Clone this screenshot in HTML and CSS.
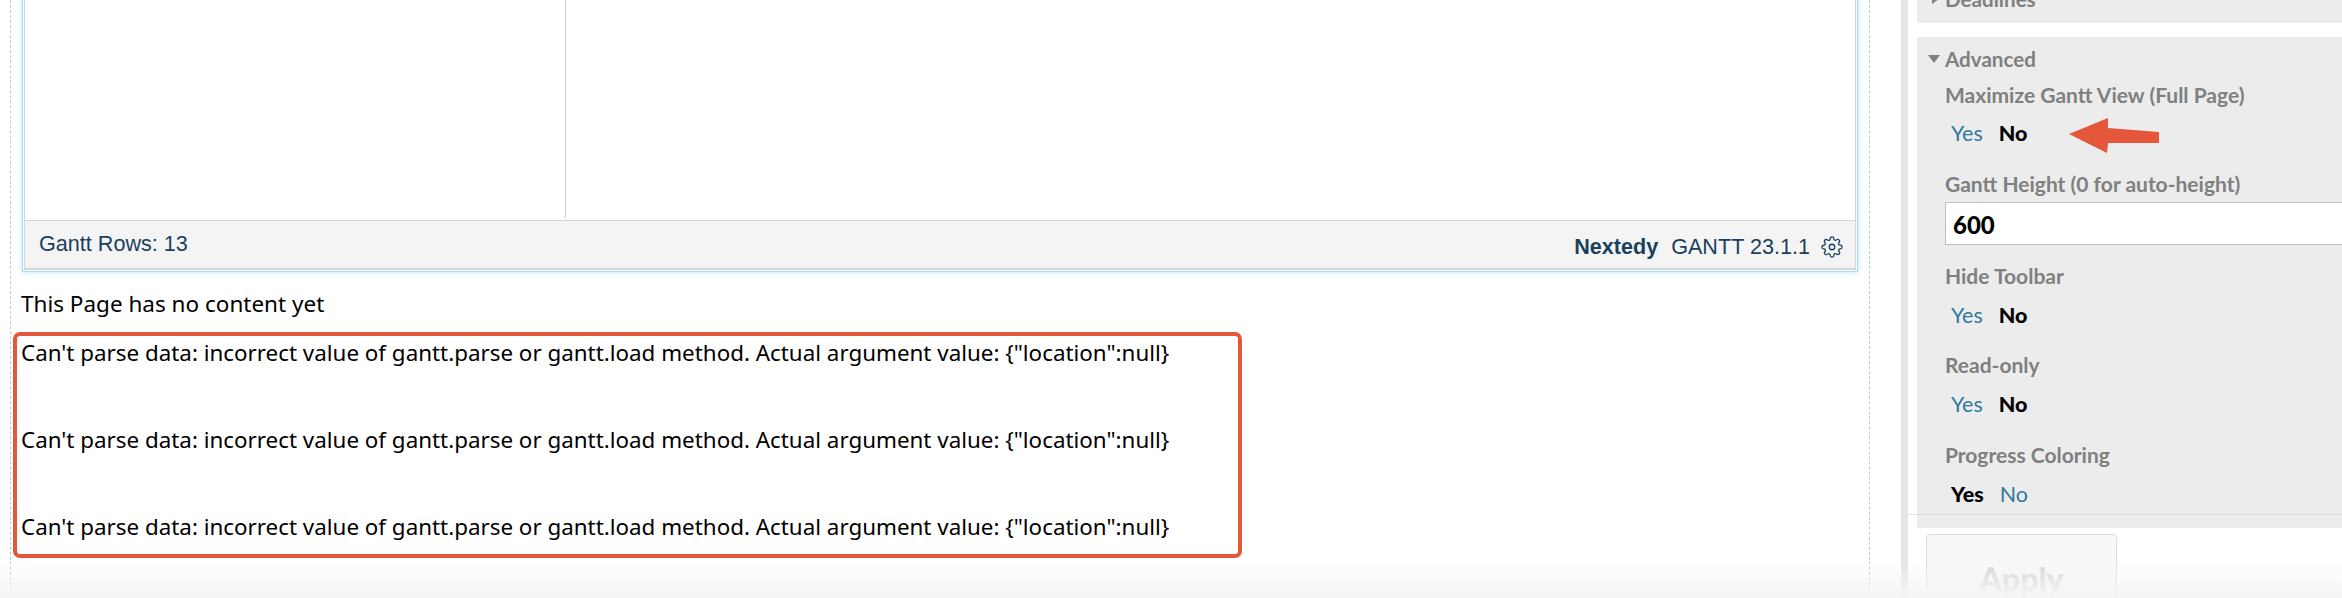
FILE: index.html
```html
<!DOCTYPE html>
<html lang="en">
<head>
<meta charset="utf-8">
<title>Gantt</title>
<link rel="stylesheet" href="styles.css">
</head>
<body>
<div class="layout">
  <main class="main">
    <div class="page">
      <section class="gantt">
        <div class="gantt-body"><div class="grid-col"></div></div>
        <footer class="gantt-foot">
          <span class="rows">Gantt Rows: 13</span>
          <span class="brand"><b>Nextedy</b><span>GANTT 23.1.1</span>
            <svg class="gear" viewBox="0 0 24 24" aria-hidden="true"><circle cx="12" cy="12" r="3"/><path d="M19.4 15a1.65 1.65 0 0 0 .33 1.82l.06.06a2 2 0 0 1 0 2.83 2 2 0 0 1-2.83 0l-.06-.06a1.65 1.65 0 0 0-1.82-.33 1.65 1.65 0 0 0-1 1.51V21a2 2 0 0 1-2 2 2 2 0 0 1-2-2v-.09A1.65 1.65 0 0 0 9 19.4a1.65 1.65 0 0 0-1.82.33l-.06.06a2 2 0 0 1-2.83 0 2 2 0 0 1 0-2.83l.06-.06a1.65 1.65 0 0 0 .33-1.82 1.65 1.65 0 0 0-1.51-1H3a2 2 0 0 1-2-2 2 2 0 0 1 2-2h.09A1.65 1.65 0 0 0 4.6 9a1.65 1.65 0 0 0-.33-1.82l-.06-.06a2 2 0 0 1 0-2.83 2 2 0 0 1 2.83 0l.06.06a1.65 1.65 0 0 0 1.82.33H9a1.65 1.65 0 0 0 1-1.51V3a2 2 0 0 1 2-2 2 2 0 0 1 2 2v.09a1.65 1.65 0 0 0 1 1.51 1.65 1.65 0 0 0 1.82-.33l.06-.06a2 2 0 0 1 2.83 0 2 2 0 0 1 0 2.83l-.06.06a1.65 1.65 0 0 0-.33 1.82V9a1.65 1.65 0 0 0 1.51 1H21a2 2 0 0 1 2 2 2 2 0 0 1-2 2h-.09a1.65 1.65 0 0 0-1.51 1z"/></svg>
          </span>
        </footer>
      </section>
      <p class="note">This Page has no content yet</p>
      <div class="errors">
        <p>Can't parse data: incorrect value of gantt.parse or gantt.load method. Actual argument value: {"location":null}</p>
        <p>Can't parse data: incorrect value of gantt.parse or gantt.load method. Actual argument value: {"location":null}</p>
        <p>Can't parse data: incorrect value of gantt.parse or gantt.load method. Actual argument value: {"location":null}</p>
      </div>
    </div>
  </main>
  <aside class="side">
    <div class="panel panel-closed"><h3 class="head"><i class="tri-right"></i>Deadlines</h3></div>
    <div class="panel panel-open">
      <h3 class="head"><i class="tri-down"></i>Advanced</h3>
      <div class="field">
        <label class="lab">Maximize Gantt View (Full Page)</label>
        <div class="opts"><a>Yes</a><b>No</b></div>
      </div>
      <div class="field field-input">
        <label class="lab">Gantt Height (0 for auto-height)</label>
        <div class="input">600</div>
      </div>
      <div class="field">
        <label class="lab">Hide Toolbar</label>
        <div class="opts"><a>Yes</a><b>No</b></div>
      </div>
      <div class="field">
        <label class="lab">Read-only</label>
        <div class="opts"><a>Yes</a><b>No</b></div>
      </div>
      <div class="field">
        <label class="lab">Progress Coloring</label>
        <div class="opts"><b>Yes</b><a>No</a></div>
      </div>
    </div>
    <div class="apply">Apply</div>
  </aside>
</div>
<svg class="arrow" viewBox="0 0 92 37" aria-hidden="true"><polygon points="0,16 39,0 39,10 90,14 90,25 39,25 38,35"/></svg>
<div class="fade"></div>
</body>
</html>
```
FILE: styles.css
```css
* { box-sizing: border-box; }
html, body { margin: 0; height: 598px; overflow: hidden; background: #fff; }
body { position: relative; font-family: "Noto Sans", sans-serif; color: #000; }
.layout { display: flex; height: 618px; margin-top: -20px; overflow: hidden; }
.main { width: 1901px; flex: none; padding-left: 10px; }
.page { width: 1860px; height: 640px; border-left: 1px dashed #c8c8c8; border-right: 1px dashed #c8c8c8; padding: 0 11px; }
.gantt { height: 292px; border: 1px solid #a3dcf4; box-shadow: 0 0 5px #b5e4f7; padding: 1px; display: flex; flex-direction: column; }
.gantt-body { flex: 1; padding-bottom: 2px; border-left: 1px solid #d4d4d4; border-right: 1px solid #d4d4d4; display: flex; }
.grid-col { width: 541px; border-right: 1px solid #cfcfcf; }
.gantt-foot { height: 50px; flex: none; background: #f4f4f4; border: 1px solid #d6d6d6; border-width: 1px 1px 2px 1px; display: flex; justify-content: space-between; padding: 0 12px 0 14px; font-family: "Liberation Sans", Arial, sans-serif; font-size: 21.6px; color: #1a3f5c; }
.rows { line-height: 45px; }
.brand { display: flex; align-items: center; gap: 13px; padding-top: 4px; }
.gear { width: 22px; height: 22px; fill: none; stroke: #1a3f5c; stroke-width: 1.4; margin-left: -2px; }
.note { margin: 17px 0 0 -1px; font-size: 22.5px; line-height: 29px; }
.errors { margin: 14px 0 0 -9px; width: 1229px; height: 226px; border: 4px solid #e4573a; border-radius: 7px; padding: 2px 0 0 4px; }
.errors p { margin: 0 0 58px; font-size: 22.38px; line-height: 29px; white-space: nowrap; }
.side { flex: 1; border-left: 7px solid #e6e6e6; padding-left: 9px; min-width: 0; font-family: "Lato", "Noto Sans", sans-serif; }
.panel { background: #ececec; }
.panel-closed { height: 43px; padding-left: 28px; }
.panel-closed .head { line-height: 38px; }
.panel-open { position: relative; margin-top: 14px; padding: 0 0 19px 28px; }
.panel-open::after { content: ""; position: absolute; left: -9px; right: 0; bottom: 13px; border-top: 1px solid #dcdcdc; }
.head { margin: 0; font-size: 20.6px; font-weight: 700; color: #808080; line-height: 44px; position: relative; }
.tri-right, .tri-down { position: absolute; width: 0; height: 0; }
.tri-right { left: -13px; top: 14px; border-left: 7px solid #808080; border-top: 5px solid transparent; border-bottom: 5px solid transparent; }
.tri-down { left: -17px; top: 18px; border-top: 8px solid #808080; border-left: 6px solid transparent; border-right: 6px solid transparent; }
.field { margin-bottom: 22px; }
.field-input { margin-bottom: 17px; }
.field-input ~ .field { margin-bottom: 21px; }
.field-input ~ .field .opts { margin-top: 12px; }
.field:last-child { margin-top: 22px; margin-bottom: 0; }
.lab { display: block; font-size: 21px; font-weight: 700; color: #808080; line-height: 28px; }
.opts { display: flex; gap: 16px; margin-top: 11px; padding-left: 6px; font-size: 21.5px; line-height: 26px; padding-bottom: 2px; }
.opts a { color: #31789f; }
.opts b { font-weight: 900; }
.input { margin-top: 4px; height: 43px; background: #fff; border: 1px solid #bdbdbd; border-right: 0; padding-left: 7px; font-size: 24px; font-weight: 900; line-height: 43px; }
.apply { margin: 6px 0 0 9px; width: 191px; height: 90px; background: #f8f8f8; border: 1px solid #dcdcdc; border-radius: 4px; text-align: center; font-size: 32px; font-weight: 900; color: #d8d8d8; line-height: 88px; }
.arrow { position: absolute; left: 2069px; top: 118px; width: 92px; height: 37px; fill: #e4573a; }
.fade { position: absolute; left: 0; right: 0; bottom: 0; height: 36px; background: linear-gradient(rgba(245,245,245,0), #f5f5f5); }
```
